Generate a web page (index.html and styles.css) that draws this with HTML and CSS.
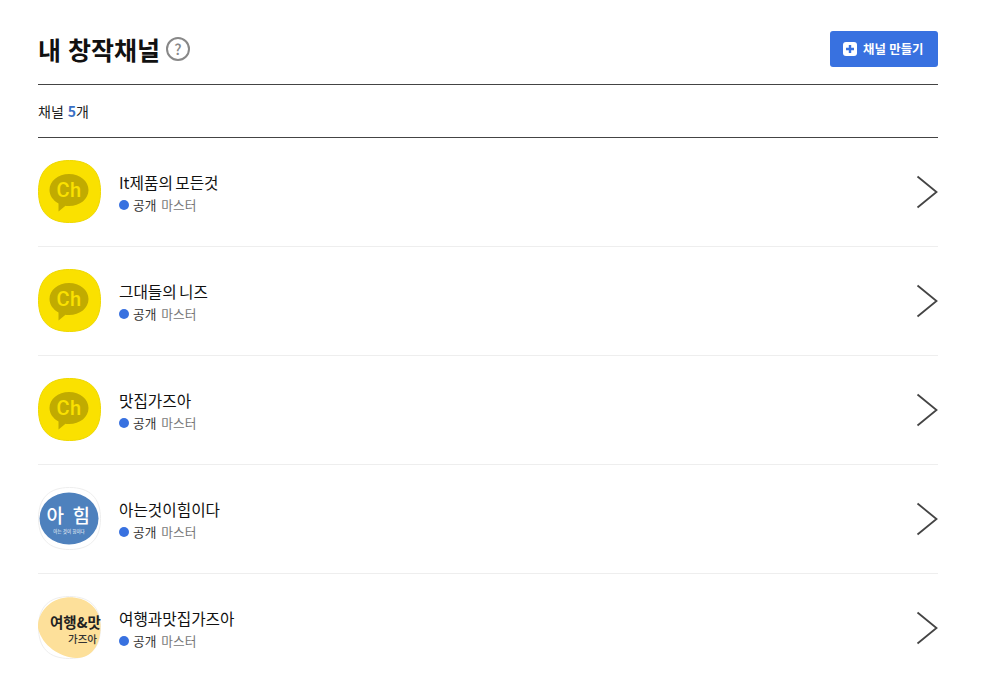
FILE: index.html
```html
<!DOCTYPE html>
<html lang="ko">
<head>
    <meta charset="UTF-8">
    <meta name="viewport" content="width=device-width, initial-scale=1.0">
    <title>내 창작채널</title>
    <link rel="stylesheet" href="styles.css">
</head>
<body>

    <svg class="defs" width="0" height="0" aria-hidden="true">
        <symbol id="arrow" viewBox="0 0 22 34">
            <path d="M1.5 1.5 L20.5 17 L1.5 32.5" fill="none" stroke="#444" stroke-width="1.8"/>
        </symbol>
        <symbol id="ch" viewBox="0 0 63 63">
            <path d="M31.5 .5 C52 .5 62.5 11 62.5 31.5 C62.5 52 52 62.5 31.5 62.5 C11 62.5 .5 52 .5 31.5 C.5 11 11 .5 31.5 .5 Z" fill="#fae100" stroke="#eed800" stroke-width="1"/>
            <path d="M31 14 C42 14 50.500 21 50.500 30 C50.500 39 42 46 31 46 C29.500 46 28.500 46 27.500 45.700 L20.500 51.500 L20.500 43.500 C15 40.500 11.500 35.500 11.500 30 C11.500 21 20 14 31 14 Z" fill="#c1ab00"/>
        </symbol>
    </svg>

    <div class="page">
        <div class="head">
            <h2>내 창작채널</h2>
            <span class="help">?</span>
            <button class="add-btn">
                <svg width="14" height="14" viewBox="0 0 14 14">
                    <rect width="14" height="14" rx="3" fill="#fff"/>
                    <path d="M7 3 V11 M3 7 H11" stroke="#3871e0" stroke-width="2.400"/>
                </svg>
                채널 만들기
            </button>
        </div>

        <div class="count">채널 <b>5</b>개</div>

        <ul class="channel-list">
            <li class="channel">
                <svg class="thumb" viewBox="0 0 63 63"><use href="#ch"/><text x="31" y="36.500" text-anchor="middle" class="ch-text">Ch</text></svg>
                <div class="info">
                    <strong>It제품의 모든것</strong>
                    <p><i class="dot"></i><span class="open">공개</span><span class="role">마스터</span></p>
                </div>
                <svg class="arrow"><use href="#arrow"/></svg>
            </li>
            <li class="channel">
                <svg class="thumb" viewBox="0 0 63 63"><use href="#ch"/><text x="31" y="36.500" text-anchor="middle" class="ch-text">Ch</text></svg>
                <div class="info">
                    <strong>그대들의 니즈</strong>
                    <p><i class="dot"></i><span class="open">공개</span><span class="role">마스터</span></p>
                </div>
                <svg class="arrow"><use href="#arrow"/></svg>
            </li>
            <li class="channel">
                <svg class="thumb" viewBox="0 0 63 63"><use href="#ch"/><text x="31" y="36.500" text-anchor="middle" class="ch-text">Ch</text></svg>
                <div class="info">
                    <strong>맛집가즈아</strong>
                    <p><i class="dot"></i><span class="open">공개</span><span class="role">마스터</span></p>
                </div>
                <svg class="arrow"><use href="#arrow"/></svg>
            </li>
            <li class="channel">
                <svg class="thumb" viewBox="0 0 63 63">
                    <path d="M31.5 .5 C52 .5 62.5 11 62.5 31.5 C62.5 52 52 62.5 31.5 62.5 C11 62.5 .5 52 .5 31.5 C.5 11 11 .5 31.5 .5 Z" fill="#fff" stroke="#eee"/>
                    <ellipse cx="31" cy="31.500" rx="29.500" ry="26" fill="#4e81bd"/>
                    <text x="31" y="36" text-anchor="middle" class="logo-big">아 힘</text>
                    <text x="31" y="46" text-anchor="middle" class="logo-small">아는 것이 힘이다</text>
                </svg>
                <div class="info">
                    <strong>아는것이힘이다</strong>
                    <p><i class="dot"></i><span class="open">공개</span><span class="role">마스터</span></p>
                </div>
                <svg class="arrow"><use href="#arrow"/></svg>
            </li>
            <li class="channel">
                <svg class="thumb" viewBox="0 0 63 63">
                    <path d="M31.5 .5 C52 .5 62.5 11 62.5 31.5 C62.5 52 52 62.5 31.5 62.5 C11 62.5 .5 52 .5 31.5 C.5 11 11 .5 31.5 .5 Z" fill="#fff" stroke="#eee"/>
                    <path d="M28 1.500 C44 0 61 8 62.500 28 C63.500 48 54 63 38 62 C22 61 4 50 0 32 C-1 18 11 3 28 1.500 Z" fill="#fde09a"/>
                    <text x="12" y="31.500" class="logo-food">여행&amp;맛</text>
                    <text x="30" y="46.500" class="logo-food-sub">가즈아</text>
                </svg>
                <div class="info">
                    <strong>여행과맛집가즈아</strong>
                    <p><i class="dot"></i><span class="open">공개</span><span class="role">마스터</span></p>
                </div>
                <svg class="arrow"><use href="#arrow"/></svg>
            </li>
        </ul>
    </div>

</body>
</html>
```

FILE: styles.css
```css
body {
    font-family: "Noto Sans CJK KR", "Noto Sans", sans-serif;
    background-color: #fff;
    color: #111;
    margin: 0;
    padding: 0;
}

.defs {
    display: block;
    height: 0;
}

.page {
    width: 900px;
    margin-left: 38px;
}

.head {
    display: flex;
    align-items: center;
    height: 85px;
    padding-top: 14px;
    box-sizing: border-box;
    border-bottom: 1px solid #444;
}

.head h2 {
    margin: 0;
    font-size: 25px;
    font-weight: 700;
    line-height: 32px;
    color: #111;
}

.help {
    width: 20px;
    height: 20px;
    margin-left: 6px;
    border: 2px solid #888;
    border-radius: 50%;
    color: #888;
    font-size: 15px;
    font-weight: 500;
    line-height: 20px;
    text-align: center;
}

.add-btn {
    display: flex;
    align-items: center;
    gap: 6px;
    width: 108px;
    height: 36px;
    margin-left: auto;
    padding: 0 0 0 13px;
    background-color: #3871e0;
    color: #fff;
    border: none;
    border-radius: 3px;
    font-family: inherit;
    font-size: 12.400px;
    font-weight: 700;
}

.count {
    height: 52px;
    line-height: 52px;
    font-size: 14px;
    color: #222;
    border-bottom: 1px solid #444;
}

.count b {
    color: #3a6fc4;
}

.channel-list {
    list-style: none;
    margin: 0;
    padding: 0;
}

.channel {
    display: flex;
    align-items: center;
    height: 108px;
    border-bottom: 1px solid #eee;
}

.thumb {
    width: 63px;
    height: 63px;
    flex-shrink: 0;
    margin-top: -1px;
    overflow: hidden;
}

.ch-text {
    font-family: Roboto, sans-serif;
    font-size: 20px;
    font-weight: 500;
    letter-spacing: .5px;
    fill: #fae100;
}

.logo-big {
    font-size: 19px;
    font-weight: 500;
    fill: #fff;
    letter-spacing: 1.500px;
}

.logo-small {
    font-size: 4.500px;
    fill: #fff;
}

.logo-food {
    font-size: 14.500px;
    font-weight: 700;
    fill: #222;
}

.logo-food-sub {
    font-size: 10.500px;
    font-weight: 500;
    fill: #333;
}

.info {
    flex: 1;
    margin-left: 18px;
    padding-top: 3px;
}

.info strong {
    display: block;
    font-size: 15.700px;
    font-weight: 400;
    line-height: 22px;
    word-spacing: -2px;
    color: #111;
}

.info p {
    display: flex;
    align-items: center;
    margin: 1px 0 0;
    font-size: 12.700px;
    line-height: 20px;
}

.dot {
    width: 10px;
    height: 10px;
    margin-right: 4px;
    border-radius: 50%;
    background-color: #3871e0;
}

.open {
    color: #333;
    margin-right: 5px;
}

.role {
    color: #777;
}

.arrow {
    width: 22px;
    height: 34px;
    flex-shrink: 0;
}
```
